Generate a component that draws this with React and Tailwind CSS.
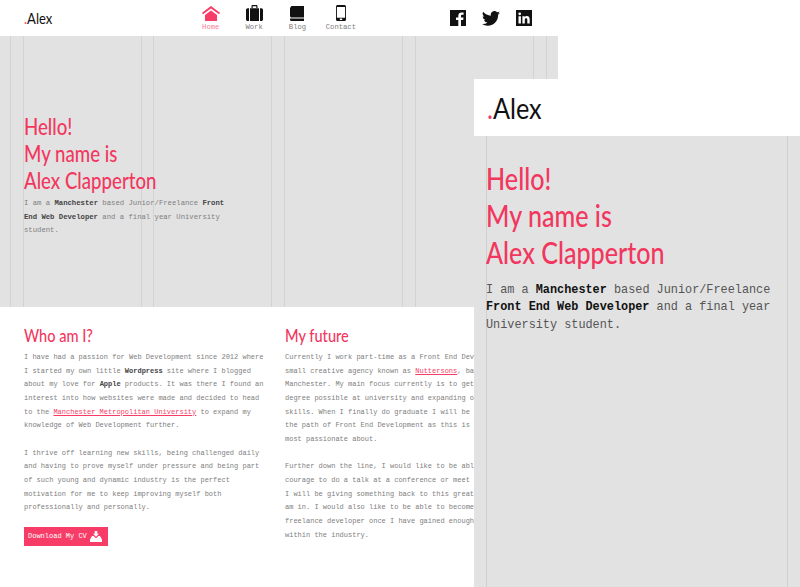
import React from "react";

const heading = "font-['Lato',sans-serif] font-medium origin-left scale-x-[0.81]";
const mono = "font-['Liberation_Mono',monospace]";
const deskLines = [10, 23, 141, 153, 271, 284, 402, 415, 533, 546];

const Home = () => (
  <svg viewBox="0 0 18 15" className="h-[15px] w-[18px]">
    <path fill="currentColor" d="M9 0l9 6.7-1 1.5L9 2.4 1 8.2 0 6.7z" />
    <path fill="currentColor" d="M3 9L9 4.6 15 9v6H3z" />
  </svg>
);
const Suitcase = () => (
  <svg viewBox="0 0 17 16" className="h-[16px] w-[17px]">
    <path fillRule="evenodd" fill="currentColor" d="M5.5 3V1.2C5.5.5 6 0 6.700 0h3.600c.7 0 1.200.5 1.200 1.200V3h-1.200V1.200H6.700V3z" />
    <path fill="currentColor" d="M0 5c0-1 .7-1.800 1.700-1.800h1.300V16H1.700C.7 16 0 15.200 0 14.200zM4 3.200h9V16H4zM14 3.200h1.300c1 0 1.700.8 1.700 1.800v9.200c0 1-.7 1.800-1.700 1.800H14z" />
  </svg>
);
const Book = () => (
  <svg viewBox="0 0 14 15" className="h-[15px] w-[14px]">
    <path fill="currentColor" d="M1.500 0H14v11.500H2c-.9 0-1.200.3-1.200.7V0.800z" />
    <path fill="currentColor" d="M0 1.500h1.500v9.200H0zM0 12.500h14V15H1.500C.6 15 0 14.300 0 13.500z" />
  </svg>
);
const Phone = () => (
  <svg viewBox="0 0 10 16" className="h-[16px] w-[10px]">
    <path fillRule="evenodd" fill="currentColor" d="M1.500 0h7A1.500 1.500 0 0 1 10 1.500v13A1.500 1.500 0 0 1 8.500 16h-7A1.500 1.500 0 0 1 0 14.500v-13A1.500 1.500 0 0 1 1.500 0zM.9 2v10.800h8.200V2zM3.800 13.600h2.400v1.500H3.800z" />
  </svg>
);
const Facebook = () => (
  <svg viewBox="0 0 16 16" className="h-[16px] w-[16px]">
    <path fill="currentColor" d="M0 0h16v16h-5v-6h2.200l.3-2.500H11V6c0-.7.2-1.200 1.200-1.200h1.400V2.600c-.3 0-1-.1-2-.1-2 0-3.300 1.200-3.300 3.400v1.600H6V10h2.300v6H0z" />
  </svg>
);
const Twitter = () => (
  <svg viewBox="0 0 24 20" className="h-[15px] w-[18px]">
    <path fill="currentColor" d="M24 2.400a9.800 9.800 0 0 1-2.800.8A4.900 4.900 0 0 0 23.300.5a9.800 9.800 0 0 1-3.100 1.200 4.900 4.900 0 0 0-8.400 4.500A14 14 0 0 1 1.700.9a4.900 4.900 0 0 0 1.500 6.600 4.900 4.900 0 0 1-2.200-.6v.1a4.900 4.900 0 0 0 3.900 4.800 4.900 4.900 0 0 1-2.200.1 4.900 4.900 0 0 0 4.600 3.400A9.900 9.900 0 0 1 0 17.300 14 14 0 0 0 7.500 19.500c9.100 0 14-7.500 14-14v-.6A10 10 0 0 0 24 2.400z" />
  </svg>
);
const Linkedin = () => (
  <svg viewBox="0 0 16 16" className="h-[16px] w-[16px]">
    <path fillRule="evenodd" fill="currentColor" d="M0 0h16v16H0zM2.500 6.300v7.200h2.400V6.300zM3.700 2.500a1.300 1.300 0 1 0 0 2.700 1.300 1.300 0 0 0 0-2.700zM6.400 6.300v7.200h2.400V9.900c0-1 .4-1.700 1.300-1.700s1.200.7 1.200 1.700v3.600h2.400V9.400c0-2.100-1.100-3.300-2.800-3.300-1 0-1.700.5-2.100 1.100v-.9z" />
  </svg>
);

function CvIcon() {
  return (
    <svg viewBox="0 0 12 11" className="h-[11px] w-[12px]">
      <path fill="#fff" d="M4.700 0h2.600v2.800H9L6 5.800 3 2.800h1.700z" />
      <path fill="#fff" d="M2 5h1.500L6 7.300 8.500 5H10l2 3.500V11H0V8.500z" />
    </svg>
  );
}

function NavItem({ icon, label, active }) {
  return (
    <div className="flex w-[43.4px] flex-col items-center">
      <div className={`flex h-[16px] items-end ${active ? "text-[#f73d67]" : "text-[#111]"}`}>{icon}</div>
      <span className={`${mono} mt-px text-[7.2px] leading-[10px] ${active ? "text-[#f97d99]" : "text-[#808080]"}`}>{label}</span>
    </div>
  );
}

function Logo({ className }) {
  return (
    <div className={`origin-left scale-x-[0.87] font-['Lato',sans-serif] text-[#111] ${className}`}>
      <span className="text-[#f73d67]">.</span>Alex
    </div>
  );
}

const B = ({ children }) => <b className="font-bold text-[#444]">{children}</b>;
const L = ({ children }) => <span className="text-[#f73d67] underline">{children}</span>;

export default function App() {
  return (
    <div className="relative h-[587px] w-[800px] overflow-hidden bg-white">
      {/* Desktop page */}
      <div className="flex h-full w-[558px] flex-col overflow-hidden">
        <header className="flex h-[36px] shrink-0 items-center bg-white pl-6 pr-[26px]">
          <Logo className="w-[165px] text-[15px]" />
          <nav className="flex w-[174px]">
            <NavItem active label="Home" icon={<Home />} />
            <NavItem label="Work" icon={<Suitcase />} />
            <NavItem label="Blog" icon={<Book />} />
            <NavItem label="Contact" icon={<Phone />} />
          </nav>
          <div className="ml-auto flex items-center gap-[16px] text-[#111]">
            <Facebook />
            <Twitter />
            <Linkedin />
          </div>
        </header>

        <section className="relative h-[271px] shrink-0 bg-[#e2e2e2] pl-6 pt-[77px]">
          {deskLines.map((x) => (
            <div key={x} className="absolute bottom-0 top-0 w-px bg-[#d3d3d3]" style={{ left: x }} />
          ))}
          <div className="relative">
            <h1 className={`${heading} text-[23px] leading-[27px] text-[#f2375f]`}>
              Hello!<br />My name is<br />Alex Clapperton
            </h1>
            <p className={`${mono} mt-[3px] w-[210px] text-[7.25px] leading-[13.6px] text-[#808080]`}>
              I am a <B>Manchester</B> based Junior/Freelance <B>Front End Web Developer</B> and a final year University student.
            </p>
          </div>
        </section>

        <section className="grid grid-cols-[261px_1fr] pl-6 pt-[17px]">
          <div>
            <h2 className={`${heading} text-[18px] leading-[22px] text-[#f2375f]`}>Who am I?</h2>
            <p className={`${mono} mt-[5px] whitespace-nowrap text-[7px] leading-[13.67px] text-[#808080]`}>
              I have had a passion for Web Development since 2012 where<br />
              I started my own little <B>Wordpress</B> site where I blogged<br />
              about my love for <B>Apple</B> products. It was there I found an<br />
              interest into how websites were made and decided to head<br />
              to the <L>Manchester Metropolitan University</L> to expand my<br />
              knowledge of Web Development further.
            </p>
            <p className={`${mono} mt-[13.67px] whitespace-nowrap text-[7px] leading-[13.67px] text-[#808080]`}>
              I thrive off learning new skills, being challenged daily<br />
              and having to prove myself under pressure and being part<br />
              of such young and dynamic industry is the perfect<br />
              motivation for me to keep improving myself both<br />
              professionally and personally.
            </p>
            <div className={`${mono} mt-[12px] flex h-[19px] w-[84px] items-center gap-[3px] bg-[#f73d67] pl-[4px] text-[7px] text-white`}>
              Download My CV <CvIcon />
            </div>
          </div>
          <div>
            <h2 className={`${heading} text-[18px] leading-[22px] text-[#f2375f]`}>My future</h2>
            <p className={`${mono} mt-[5px] whitespace-nowrap text-[7px] leading-[13.67px] text-[#808080]`}>
              Currently I work part-time as a Front End Developer at a<br />
              small creative agency known as <L>Nuttersons</L>, based in<br />
              Manchester. My main focus currently is to get the best<br />
              degree possible at university and expanding on my<br />
              skills. When I finally do graduate I will be going down<br />
              the path of Front End Development as this is what I am<br />
              most passionate about.
            </p>
            <p className={`${mono} mt-[13.67px] whitespace-nowrap text-[7px] leading-[13.67px] text-[#808080]`}>
              Further down the line, I would like to be able to have the<br />
              courage to do a talk at a conference or meet others so<br />
              I will be giving something back to this great industry I<br />
              am in. I would also like to be able to become a<br />
              freelance developer once I have gained enough experience<br />
              within the industry.
            </p>
          </div>
        </section>
      </div>

      {/* Mobile window */}
      <div className="absolute bottom-0 left-[474px] top-[79px] flex w-[326px] flex-col overflow-hidden bg-[#e2e2e2]">
        <div className="flex h-[57px] shrink-0 items-center bg-white pl-[13px]">
          <Logo className="text-[29px]" />
        </div>
        <div className="relative flex-1 pl-3 pt-[24px]">
          <div className="absolute bottom-0 left-3 top-0 w-px bg-[#cfcfcf]" />
          <div className="absolute bottom-0 right-3 top-0 w-px bg-[#cfcfcf]" />
          <div className="relative">
            <h1 className={`${heading} text-[31px] leading-[37px] text-[#f2375f]`}>
              Hello!<br />My name is<br />Alex Clapperton
            </h1>
            <p className={`${mono} mt-[11px] whitespace-nowrap text-[11.85px] leading-[17.3px] text-[#555]`}>
              I am a <b className="font-bold text-[#111]">Manchester</b> based Junior/Freelance<br />
              <b className="font-bold text-[#111]">Front End Web Developer</b> and a final year<br />
              University student.
            </p>
          </div>
        </div>
      </div>
    </div>
  );
}
